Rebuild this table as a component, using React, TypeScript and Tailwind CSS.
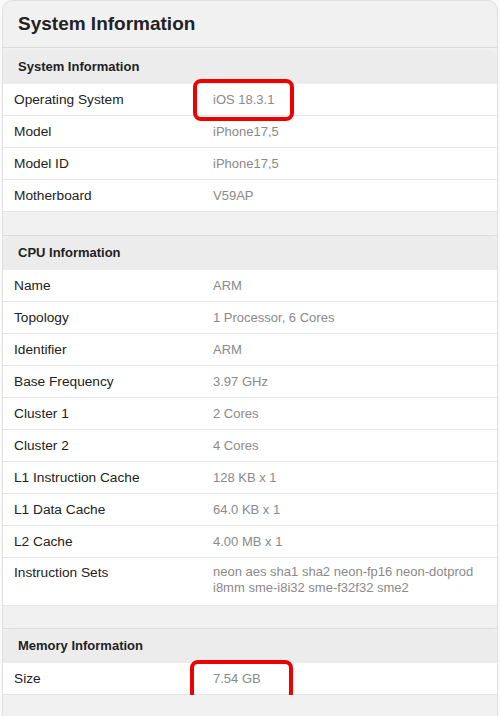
import React from "react"

type Row = { label: string; value: React.ReactNode; tall?: boolean; mark?: string }

const sections: { title: string; rows: Row[] }[] = [
  {
    title: "System Information",
    rows: [
      { label: "Operating System", value: "iOS 18.3.1", mark: "left-[-20px] top-[-13px] w-[101px] h-[42px]" },
      { label: "Model", value: "iPhone17,5" },
      { label: "Model ID", value: "iPhone17,5" },
      { label: "Motherboard", value: "V59AP" },
    ],
  },
  {
    title: "CPU Information",
    rows: [
      { label: "Name", value: "ARM" },
      { label: "Topology", value: "1 Processor, 6 Cores" },
      { label: "Identifier", value: "ARM" },
      { label: "Base Frequency", value: "3.97 GHz" },
      { label: "Cluster 1", value: "2 Cores" },
      { label: "Cluster 2", value: "4 Cores" },
      { label: "L1 Instruction Cache", value: "128 KB x 1" },
      { label: "L1 Data Cache", value: "64.0 KB x 1" },
      { label: "L2 Cache", value: "4.00 MB x 1" },
      {
        label: "Instruction Sets",
        value: "neon aes sha1 sha2 neon-fp16 neon-dotprod i8mm sme-i8i32 sme-f32f32 sme2",
        tall: true,
      },
    ],
  },
  {
    title: "Memory Information",
    rows: [{ label: "Size", value: "7.54 GB", mark: "left-[-23px] top-[-11px] w-[103px] h-[41px]" }],
  },
]

function InfoRow({ row }: { row: Row }) {
  return (
    <div
      className={
        row.tall
          ? "flex bg-white border-b border-[#e4e4e4] pt-[6px] h-[48px]"
          : "flex items-center bg-white border-b border-[#e4e4e4] h-[32px]"
      }
    >
      <div className="w-[210px] pl-[11px] shrink-0 text-[13.7px] text-[#222] leading-[17px]">{row.label}</div>
      <div className="relative flex-1 pr-[10px] text-[13px] text-[#8a8a8a] leading-[16px]">
        {row.value}
        {row.mark && <span className={"absolute rounded-[8px] border-[4px] border-[#ee0000] " + row.mark} />}
      </div>
    </div>
  )
}

export default function App() {
  return (
    <div className="w-[500px] h-[716px] overflow-hidden bg-[#fafafa] px-[2px] font-['Liberation_Sans',Arial,sans-serif]">
      <div className="h-[730px] rounded-[10px] border border-[#e0e0e0] bg-[#f1f1f1]">
        <div className="h-[47px] flex items-center px-[15px] text-[19px] font-bold text-[#222] border-b border-[#dcdcdc]">
          System Information
        </div>
        {sections.map((s, i) => (
          <div
            key={s.title}
            className={i === 0 ? "pt-[2px]" : i === 1 ? "border-t border-[#dcdcdc] mt-[23px]" : "border-t border-[#dcdcdc] mt-[22px]"}
          >
            <div className="rounded-t-[8px] overflow-hidden">
              <div className="h-[34px] flex items-center px-[15px] bg-[#ececec] text-[13px] font-bold text-[#222]">
                {s.title}
              </div>
              {s.rows.map((r) => (
                <InfoRow key={r.label} row={r} />
              ))}
            </div>
          </div>
        ))}
      </div>
    </div>
  )
}
